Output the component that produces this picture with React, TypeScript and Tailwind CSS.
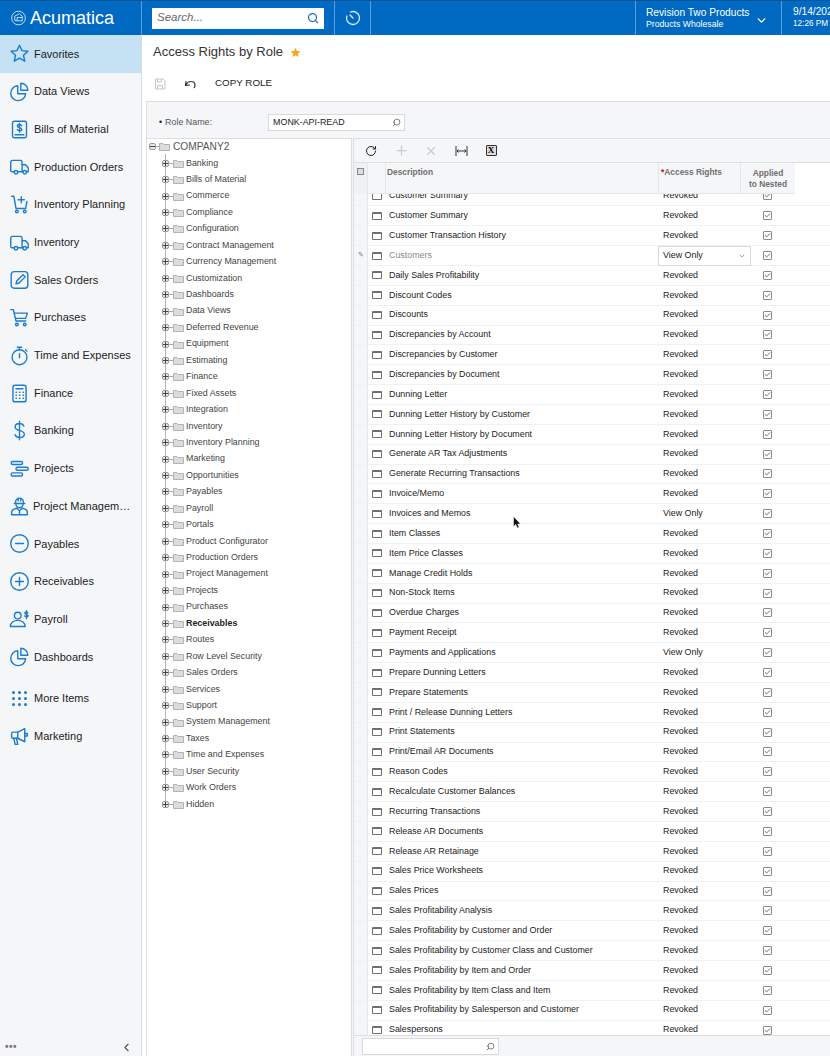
import { ChevronDown, ChevronLeft, Search, RotateCw, Plus, X, Check } from "lucide-react";
import type { ReactNode } from "react";

const S = (p: { children: ReactNode }) => (
  <svg width="21" height="21" viewBox="0 0 24 24" fill="none" stroke="#1b7ccb" strokeWidth="1.6" strokeLinecap="round" strokeLinejoin="round">
    {p.children}
  </svg>
);

const truck = (
  <>
    <path d="M6 18H3.500A1.500 1.500 0 0 1 2 16.500V7a2 2 0 0 1 2-2h9a2 2 0 0 1 2 2v11H10" />
    <path d="M15 10h4l3 3.500V18h-2M15 18h1" />
    <circle cx="8" cy="18.500" r="2" />
    <circle cx="18" cy="18.500" r="2" />
  </>
);
const pie = (
  <>
    <path d="M10 5.500a8.500 8.500 0 1 0 9 9h-9z" />
    <path d="M13.500 2.500a8 8 0 0 1 8 8h-8z" />
  </>
);
const cart = (
  <>
    <path d="M2 3h3l3 13h11" />
    <path d="M6 7h15l-2 6H7.500" />
    <circle cx="9" cy="20" r="1.500" />
    <circle cx="18" cy="20" r="1.500" />
  </>
);

const navItems: { label: string; icon: ReactNode; h?: string }[] = [
  { label: "Favorites", icon: <path d="M12 2.500l2.900 6.200 6.700.8-5 4.600 1.400 6.700L12 17.400l-6 3.400 1.400-6.700-5-4.600 6.700-.8z" /> },
  { label: "Data Views", icon: pie },
  {
    label: "Bills of Material",
    icon: (
      <>
        <rect x="4" y="2.500" width="16" height="19" rx="2" />
        <path d="M7 18h10M14.500 7.500c-.5-1-1.500-1.300-2.500-1.300-1.400 0-2.500.7-2.500 1.800 0 2.500 5 1.200 5 3.600 0 1.100-1.100 1.800-2.500 1.800-1 0-2-.4-2.600-1.300M12 5v10" />
      </>
    ),
  },
  { label: "Production Orders", icon: truck },
  {
    label: "Inventory Planning",
    icon: (
      <>
        <path d="M3 2.500h2.500l2.500 14h11l1.500-8" />
        <path d="M14 3v7M10.500 6.500h7" />
        <circle cx="9" cy="20" r="1.500" />
        <circle cx="18" cy="20" r="1.500" />
      </>
    ),
  },
  { label: "Inventory", icon: truck },
  {
    label: "Sales Orders",
    icon: (
      <>
        <rect x="2.500" y="3" width="19" height="19" rx="3.500" />
        <path d="M8 17l1-3.500 7-7 2.500 2.500-7 7z" />
      </>
    ),
  },
  { label: "Purchases", icon: cart },
  {
    label: "Time and Expenses",
    icon: (
      <>
        <circle cx="12" cy="14" r="8.500" />
        <path d="M12 2.500v3M9.500 2.500h5M12 10v4.500M19 5.500l1.500 1.500" />
      </>
    ),
  },
  {
    label: "Finance",
    icon: (
      <>
        <rect x="4.500" y="2.500" width="15" height="19" rx="2.500" />
        <path d="M8 6.500h8M8 10.500h.5M12 10.500h.5M16 10.500h.5M8 14h.5M12 14h.5M16 14h.5M8 17.500h.5M12 17.500h.5M16 17.500h.5" />
      </>
    ),
  },
  { label: "Banking", icon: <path d="M17 7c-.8-2-2.800-3-5-3-2.800 0-5 1.500-5 4 0 5.500 10.500 2.800 10.500 8.300 0 2.300-2.300 3.700-5.200 3.700-2.400 0-4.600-1.100-5.300-3.200M12 1.500v21" /> },
  {
    label: "Projects",
    icon: (
      <>
        <rect x="2.500" y="4" width="13" height="3.500" rx="1.700" />
        <rect x="8" y="10.500" width="14" height="3.500" rx="1.700" />
        <rect x="2.500" y="17" width="13" height="3.500" rx="1.700" />
      </>
    ),
  },
  {
    label: "Project Managem…",
    h: "ml-[-1px]",
    icon: (
      <>
        <path d="M7.500 8.500V7a4.500 4.500 0 0 1 9 0v1.500M6 8.500h12M10.500 2.800v3M13.500 2.800v3" />
        <path d="M8 9.500a4 4 0 0 0 8 0" />
        <path d="M3 21.500v-2.500c0-3 2.800-4.500 6-5l3 3 3-3c3.200.5 6 2 6 5v2.500zM12 17v4.500" />
      </>
    ),
  },
  {
    label: "Payables",
    icon: (
      <>
        <circle cx="12" cy="12" r="10" />
        <path d="M7.500 12h9" />
      </>
    ),
  },
  {
    label: "Receivables",
    icon: (
      <>
        <circle cx="12" cy="12" r="10" />
        <path d="M7.500 12h9M12 7.500v9" />
      </>
    ),
  },
  {
    label: "Payroll",
    icon: (
      <>
        <circle cx="10" cy="7.500" r="3.800" />
        <path d="M1.500 20c0-4.500 4-7 8.500-7s8.500 2.500 8.500 7zM21.500 4.500c-.4-.8-1-1.200-1.700-1.200-1 0-1.700.5-1.700 1.400 0 1.800 3.700 1 3.700 2.900 0 .9-.8 1.400-1.900 1.400-.8 0-1.500-.4-1.900-1.100M20 2v9" />
      </>
    ),
  },
  { label: "Dashboards", icon: pie },
];

const treeItems = [
  "Banking", "Bills of Material", "Commerce", "Compliance", "Configuration", "Contract Management", "Currency Management",
  "Customization", "Dashboards", "Data Views", "Deferred Revenue", "Equipment", "Estimating", "Finance", "Fixed Assets",
  "Integration", "Inventory", "Inventory Planning", "Marketing", "Opportunities", "Payables", "Payroll", "Portals",
  "Product Configurator", "Production Orders", "Project Management", "Projects", "Purchases", "Receivables", "Routes",
  "Row Level Security", "Sales Orders", "Services", "Support", "System Management", "Taxes", "Time and Expenses",
  "User Security", "Work Orders", "Hidden",
];

const rows: [string, string?][] = [
  ["Customer Summary"], ["Customer Summary"], ["Customer Transaction History"], ["Customers", "edit"], ["Daily Sales Profitability"],
  ["Discount Codes"], ["Discounts"], ["Discrepancies by Account"], ["Discrepancies by Customer"], ["Discrepancies by Document"],
  ["Dunning Letter"], ["Dunning Letter History by Customer"], ["Dunning Letter History by Document"], ["Generate AR Tax Adjustments"],
  ["Generate Recurring Transactions"], ["Invoice/Memo"], ["Invoices and Memos", "View Only"], ["Item Classes"], ["Item Price Classes"],
  ["Manage Credit Holds"], ["Non-Stock Items"], ["Overdue Charges"], ["Payment Receipt"], ["Payments and Applications", "View Only"],
  ["Prepare Dunning Letters"], ["Prepare Statements"], ["Print / Release Dunning Letters"], ["Print Statements"], ["Print/Email AR Documents"],
  ["Reason Codes"], ["Recalculate Customer Balances"], ["Recurring Transactions"], ["Release AR Documents"], ["Release AR Retainage"],
  ["Sales Price Worksheets"], ["Sales Prices"], ["Sales Profitability Analysis"], ["Sales Profitability by Customer and Order"],
  ["Sales Profitability by Customer Class and Customer"], ["Sales Profitability by Item and Order"], ["Sales Profitability by Item Class and Item"],
  ["Sales Profitability by Salesperson and Customer"], ["Salespersons"],
];

function Folder() {
  return (
    <svg width="11" height="9" viewBox="0 0 11 9" className="shrink-0">
      <path d="M.5 1.500h3.500l1 1h5.500v6H.5z" fill="#dcdcdc" stroke="#a3a3a3" strokeWidth=".8" />
    </svg>
  );
}

function Expander({ minus }: { minus?: boolean }) {
  return (
    <span className="w-[7px] h-[7px] shrink-0 rounded-[2px] border border-[#9a9a9a] bg-[#e8e8e8] flex items-center justify-center relative">
      <span className="w-[5px] h-px bg-[#444]" />
      {!minus && <span className="w-px h-[5px] bg-[#444] absolute" />}
    </span>
  );
}

function NavItem({ label, icon, active, h }: { label: string; icon: ReactNode; active?: boolean; h?: string }) {
  return (
    <div className={`h-[37.7px] flex items-center pl-[8px] gap-[4px] text-[11px] text-[#1c1c1c] whitespace-nowrap ${active ? "bg-[#c5e1f4]" : ""}`}>
      <span className="w-[22px] flex justify-center"><S>{icon}</S></span>
      <span className={h}>{label}</span>
    </div>
  );
}

function Row({ name, state }: { name: string; state?: string }) {
  const editing = state === "edit";
  return (
    <div className="h-[19.87px] flex border-b border-[#edf2f6] text-[8.9px] text-[#222] items-stretch">
      <div className="w-[13px] shrink-0 bg-[#f5f6f8] flex items-center justify-center text-[#777] text-[7px]">{editing ? "✎" : ""}</div>
      <div className="w-[18px] shrink-0 flex items-center justify-center border-l border-[#e4e6ea]">
        <span className="w-[10px] h-[8px] border border-[#6f6f6f] border-t-2 rounded-[1px]" />
      </div>
      <div className={`w-[273px] shrink-0 flex items-center pl-[4px] ${editing ? "text-[#8a8a8a]" : ""}`}>{name}</div>
      <div className="w-[82px] shrink-0 flex items-center pl-[5px] relative">
        {editing ? (
          <div className="absolute left-0 top-0 z-10 w-[93px] h-[20px] bg-white border border-[#d9d9d9] flex items-center justify-between pl-[4px] pr-[4px]">
            View Only
            <ChevronDown size={8} color="#777" />
          </div>
        ) : (
          state ?? "Revoked"
        )}
      </div>
      <div className="w-[55px] shrink-0 flex items-center justify-center">
        <span className="w-[9px] h-[9px] border border-[#8a8a8a] rounded-[1px] flex items-center justify-center">
          <Check size={7} color="#555" strokeWidth={3} />
        </span>
      </div>
    </div>
  );
}

export default function App() {
  return (
    <div className="w-[830px] h-[1056px] overflow-hidden bg-white flex flex-col relative font-['Liberation_Sans',Arial,sans-serif]">
      {/* top bar */}
      <header className="h-[35px] shrink-0 bg-[#0069c1] border-t border-[#0a5596] flex text-white">
        <div className="w-[142px] shrink-0 border-r border-[#5a9ddb] flex items-center pl-[11px] gap-[4px]">
          <svg width="15" height="16" viewBox="0 0 16 16" fill="none" stroke="#cfe2f3" strokeWidth="1">
            <circle cx="8" cy="8" r="7.300" />
            <path d="M4 10.500V6l5-2.500 3 2.500v5H6.500L4 10.500M6.500 11V7.500H12" />
          </svg>
          <span className="text-[18px] leading-none">Acumatica</span>
        </div>
        <div className="w-[193px] shrink-0 border-r border-[#5a9ddb] flex items-center pl-[10px]">
          <div className="w-[172px] h-[21px] bg-white flex items-center justify-between px-[5px]">
            <span className="italic text-[11.500px] text-[#666]">Search...</span>
            <Search size={12} color="#1b73c0" strokeWidth={2.500} />
          </div>
        </div>
        <div className="w-[36px] shrink-0 border-r border-[#5a9ddb] flex items-center justify-center">
          <svg width="16" height="16" viewBox="0 0 16 16" fill="none" stroke="#dcebf8" strokeWidth="1.300" strokeLinecap="round">
            <path d="M5.500 2A6.500 6.500 0 1 1 1.800 6M8 8L5 5" />
          </svg>
        </div>
        <div className="flex-1 border-r border-[#5a9ddb]" />
        <div className="w-[146px] shrink-0 border-r border-[#5a9ddb] flex items-center pl-[10px]">
          <div className="flex-1 leading-none">
            <div className="text-[10.200px] mb-[2px] whitespace-nowrap">Revision Two Products</div>
            <div className="text-[8.700px] whitespace-nowrap">Products Wholesale</div>
          </div>
          <ChevronDown size={13} className="mr-[13px] mt-[4px]" strokeWidth={2.500} />
        </div>
        <div className="w-[48px] shrink-0 pl-[11px] leading-none whitespace-nowrap">
          <div className="text-[10.200px] mt-[6px] mb-[3px]">9/14/2023</div>
          <div className="text-[8.200px]">12:26 PM</div>
        </div>
      </header>

      <div className="flex flex-1 min-h-0">
        {/* sidebar */}
        <aside className="w-[142px] shrink-0 bg-[#f5f6f8] border-r border-[#d9dbdf] flex flex-col">
          {navItems.map((n, i) => (
            <NavItem key={n.label + i} label={n.label} icon={n.icon} active={i === 0} h={n.h} />
          ))}
          <div className="h-[42px] mt-[2px] flex items-center pl-[8px] gap-[4px] text-[11px] text-[#1c1c1c]">
            <span className="w-[22px] grid grid-cols-3 gap-[3.500px] pl-[4px] pr-[3px]">
              {Array.from({ length: 9 }).map((_, i) => (
                <span key={i} className="w-[2.500px] h-[2.500px] bg-[#1b7ccb] rounded-full" />
              ))}
            </span>
            More Items
          </div>
          <div className="h-[34px] flex items-center pl-[8px] gap-[4px] text-[11px] text-[#1c1c1c]">
            <span className="w-[22px] flex justify-center">
              <S>
                <path d="M3 8.500c0-1 .5-1.500 1.500-1.500H10l8-4v15l-8-4H4.500C3.500 14 3 13.500 3 12.500z" />
                <path d="M5.500 14l1.500 7h3L8.500 14M10 7v7M18 8.500h3v3h-3" />
              </S>
            </span>
            Marketing
          </div>
          <div className="mt-auto h-[18px] flex items-center justify-between pl-[5px] pr-[8px] text-[#777]">
            <span className="text-[10px] tracking-[0.500px] font-bold leading-none">•••</span>
            <ChevronLeft size={13} color="#555" />
          </div>
        </aside>

        {/* main */}
        <main className="flex-1 min-w-0 flex flex-col">
          <div className="h-[66px] shrink-0 pl-[11px]">
            <div className="h-[34px] flex items-center gap-[7px] text-[13px] text-[#333]">
              Access Rights by Role
              <svg width="11" height="11" viewBox="0 0 24 24" fill="#f5a623"><path d="M12 1.500l3.200 7 7.500.9-5.500 5.100 1.500 7.500-6.700-3.800-6.700 3.800 1.500-7.500L1.300 9.400l7.500-.9z" /></svg>
            </div>
            <div className="h-[29px] flex items-center text-[9.800px] text-[#222]">
              <svg width="12" height="12" viewBox="0 0 12 12" fill="none" stroke="#c5c7ca" className="ml-[1px]">
                <path d="M1.500 1h7.500l2 2v8h-9.500zM3.500 1v3h4V1M3.500 11V7.500h5V11" />
              </svg>
              <svg width="13" height="12" viewBox="0 0 13 12" fill="none" stroke="#333" strokeWidth="1.200" strokeLinecap="round" className="ml-[18px]">
                <path d="M1.500 7.500L2 3.500M1.500 7.500L5.500 7M1.800 7.200C3 4.500 5 3.500 7 3.500c2.500 0 4 1.800 4 3.800 0 1-.3 1.700-.8 2.300" />
              </svg>
              <span className="ml-[18px]">COPY ROLE</span>
            </div>
          </div>

          <div className="flex-1 min-h-0 ml-[4px] bg-[#f5f6f8] border-t border-l border-[#dcdee2] flex flex-col">
            <div className="h-[36px] shrink-0 flex items-center pl-[12px] pt-[5px] text-[8.900px] text-[#555]">
              <span className="text-[#222] mr-[3px]">•</span>
              <span className="w-[103px]">Role Name:</span>
              <div className="w-[137px] h-[17px] bg-white border border-[#d7d9dd] flex items-center justify-between pl-[4px] pr-[3px] text-[#222]">
                MONK-API-READ
                <Search size={9} color="#555" className="-scale-x-100" />
              </div>
            </div>

            <div className="flex-1 min-h-0 flex">
              {/* tree */}
              <div className="w-[205px] shrink-0 bg-white border-t border-r border-[#dcdee2] text-[8.900px] text-[#444] overflow-hidden">
                <div className="h-[15px] flex items-center pl-[2px]">
                  <Expander minus />
                  <span className="w-[3px] h-px bg-[#aaa]" />
                  <Folder />
                  <span className="ml-[3px] text-[10.200px] text-[#555]">COMPANY2</span>
                </div>
                <div className="ml-[18px] pt-[1px] border-l border-[#b5b5b5] h-[650px]">
                  {treeItems.map((t) => (
                    <div key={t} className="h-[16.44px] flex items-center -ml-[4px]">
                      <Expander />
                      <span className="w-[4px] h-px bg-[#aaa]" />
                      <Folder />
                      <span className={`ml-[2px] whitespace-nowrap ${t === "Receivables" ? "font-bold text-[#222]" : ""}`}>{t}</span>
                    </div>
                  ))}
                </div>
              </div>

              {/* grid */}
              <div className="flex-1 min-w-0 ml-[1px] bg-white flex flex-col border-l border-[#dcdee2]">
                <div className="h-[25px] shrink-0 bg-[#f5f6f8] border-t border-b border-[#dcdee2] flex items-center pl-[2px]">
                  <span className="w-[30px] flex justify-center"><RotateCw size={12} color="#222" /></span>
                  <span className="w-[30px] flex justify-center"><Plus size={15} color="#c9cbcf" /></span>
                  <span className="w-[30px] flex justify-center"><X size={14} color="#c9cbcf" /></span>
                  <span className="w-[30px] flex justify-center">
                    <svg width="13" height="10" viewBox="0 0 13 10" fill="none" stroke="#333" strokeWidth="1">
                      <path d="M1 0v10M12 0v10M2 5h9M3.500 3.500L2 5l1.500 1.500M9.500 3.500L11 5 9.500 6.500" />
                    </svg>
                  </span>
                  <span className="w-[30px] flex justify-center">
                    <span className="w-[11px] h-[11px] border border-[#333] bg-[#ddd] rounded-[1px] text-[9px] leading-[9px] font-bold text-center font-['Liberation_Serif',serif] text-black">X</span>
                  </span>
                </div>
                <div className="h-[31px] shrink-0 flex text-[8.400px] font-bold text-[#707070] relative z-20 w-[441px]">
                  <div className="w-[13px] bg-[#f0f1f3] flex justify-center pt-[5px]">
                    <span className="w-[7px] h-[7px] border border-[#888] bg-[#ddd]" />
                  </div>
                  <div className="w-[18px] bg-[#f5f6f8] border-l border-b border-[#e4e6ea]" />
                  <div className="w-[273px] bg-[#f5f6f8] border-l border-b border-[#e4e6ea] pl-[1px] pt-[3px]">Description</div>
                  <div className="w-[82px] bg-[#f5f6f8] border-l border-b border-[#e4e6ea] pl-[2px] pt-[3px] whitespace-nowrap">
                    <span className="text-[#d0021b]">*</span>Access Rights
                  </div>
                  <div className="w-[55px] bg-[#f5f6f8] border-l border-b border-[#e4e6ea] pt-[5px] text-center leading-[11px]">
                    Applied<br />to Nested
                  </div>
                </div>
                <div className="flex-1 min-h-0 overflow-hidden">
                  <div className="-mt-[7.500px]">
                    {rows.map((r, i) => (
                      <Row key={r[0] + i} name={r[0]} state={r[1]} />
                    ))}
                  </div>
                </div>
                <div className="h-[21px] shrink-0 bg-[#f5f6f8] border-t border-[#dcdee2] flex items-center pl-[8px] relative z-20">
                  <div className="w-[137px] h-[17px] bg-white border border-[#d7d9dd] flex items-center justify-end pr-[3px]">
                    <Search size={9} color="#555" className="-scale-x-100" />
                  </div>
                </div>
              </div>
            </div>
          </div>
        </main>
      </div>

      {/* mouse pointer */}
      <svg width="9" height="13" viewBox="0 0 9 13" className="absolute left-[513px] top-[516px]">
        <path d="M.5.500v10l2.300-2 1.500 3.500 1.800-.8-1.500-3.300h3z" fill="#111" stroke="#fff" strokeWidth=".5" />
      </svg>
    </div>
  );
}
